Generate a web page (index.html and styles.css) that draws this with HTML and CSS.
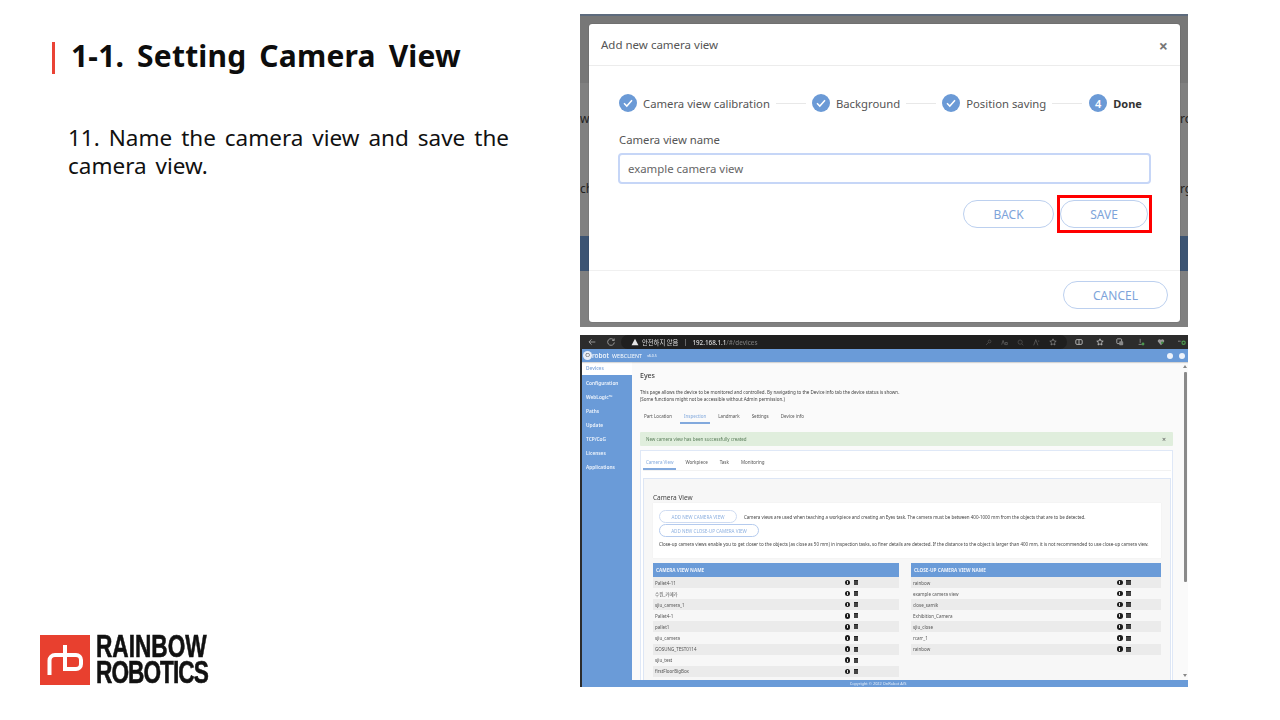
FILE: index.html
```html
<!DOCTYPE html>
<html lang="en">
<head>
<meta charset="utf-8">
<title>1-1. Setting Camera View</title>
<link rel="stylesheet" href="styles.css">
</head>
<body>
<main class="slide">
  <section class="left">
    <h1 class="title">1-1. Setting Camera View</h1>
    <p class="step-text">11. Name the camera view and save the camera view.</p>
    <div class="logo">
      <svg class="logo-mark" viewBox="0 0 50 50" width="50" height="50">
        <rect width="50" height="50" fill="#e8402f"/>
        <path d="M9.500 40V25.500a5.500 5.500 0 0 1 5.500-5.500H25M25 10V34H36a5 5 0 0 0 5-5V25a5 5 0 0 0-5-5H25" fill="none" stroke="#fff" stroke-width="4"/>
      </svg>
      <div class="logo-text"><span>RAINBOW</span><span class="logo-second">ROBOTICS</span></div>
    </div>
  </section>

  <section class="right">
    <div class="shot-top">
      <div class="band band-a"></div>
      <div class="band band-b"></div>
      <div class="band band-c"></div>
      <div class="band band-d"></div>
      <span class="frag frag-w">w</span><span class="frag frag-ch">ch</span>
      <span class="frag frag-ro">ro</span><span class="frag frag-rg">rg</span>
      <div class="modal">
        <header class="modal-head"><span>Add new camera view</span><span class="close">×</span></header>
        <div class="modal-body">
          <div class="stepper">
            <span class="dot"><svg viewBox="0 0 18 18" width="18" height="18"><path d="M5 9.300l2.800 2.800L13 6.300" fill="none" stroke="#fff" stroke-width="1.500"/></svg></span>
            <span class="step-name">Camera view calibration</span><i class="line"></i>
            <span class="dot"><svg viewBox="0 0 18 18" width="18" height="18"><path d="M5 9.300l2.800 2.800L13 6.300" fill="none" stroke="#fff" stroke-width="1.500"/></svg></span>
            <span class="step-name">Background</span><i class="line"></i>
            <span class="dot"><svg viewBox="0 0 18 18" width="18" height="18"><path d="M5 9.300l2.800 2.800L13 6.300" fill="none" stroke="#fff" stroke-width="1.500"/></svg></span>
            <span class="step-name">Position saving</span><i class="line line-last"></i>
            <span class="dot">4</span>
            <span class="step-name step-done">Done</span>
          </div>
          <label class="field-label">Camera view name</label>
          <div class="input">example camera view</div>
          <div class="actions">
            <span class="pill pill-back">BACK</span>
            <span class="save-mark"><span class="pill pill-save">SAVE</span></span>
          </div>
        </div>
        <footer class="modal-foot"><span class="pill pill-cancel">CANCEL</span></footer>
      </div>
    </div>

    <div class="shot-bottom">
      <div class="browser">
        <svg class="b-ico" viewBox="0 0 12 12" width="10" height="10"><path d="M10 6H2.500M5.500 2.800L2.300 6l3.200 3.200" fill="none" stroke="#aaa" stroke-width="1"/></svg>
        <svg class="b-ico b-reload" viewBox="0 0 12 12" width="10" height="10"><path d="M9.500 4A4 4 0 1 0 10 6.500M9.800 1.800V4.200H7.400" fill="none" stroke="#aaa" stroke-width="1"/></svg>
        <div class="omni">
          <svg viewBox="0 0 10 10" width="8" height="8"><path d="M5 1l4.300 8H.7z" fill="#e6e6e6"/></svg>
          <span class="omni-warn">안전하지 않음</span><i class="omni-sep"></i>
          <span class="omni-url">192.168.1.1<em>/#/devices</em></span>
          <span class="omni-tools">
            <svg viewBox="0 0 10 10" width="7" height="7"><circle cx="6.500" cy="3.500" r="2" fill="none" stroke="#555"/><path d="M5 5L1.500 8.500" stroke="#555"/></svg>
            <svg viewBox="0 0 10 10" width="7" height="7"><path d="M1 8L3 2l2 6M6 5h3v3H6z" fill="none" stroke="#666"/></svg>
            <svg viewBox="0 0 10 10" width="7" height="7"><circle cx="4.500" cy="4.500" r="3" fill="none" stroke="#555"/><path d="M7 7l2 2" stroke="#555"/></svg>
            <svg viewBox="0 0 10 10" width="7" height="7"><path d="M1 9l3-8 3 8M7 3h2" fill="none" stroke="#666"/></svg>
            <svg viewBox="0 0 10 10" width="8" height="8"><path d="M5 1l1.200 2.700 2.800.3-2.100 1.900.6 2.900L5 7.300 2.500 8.800l.6-2.900L1 4l2.800-.3z" fill="none" stroke="#999" stroke-width=".8"/></svg>
          </span>
        </div>
        <span class="ext-tools">
          <svg viewBox="0 0 10 10" width="8" height="8"><rect x="1" y="2" width="8" height="6" rx="1.500" fill="none" stroke="#ccc"/><path d="M5 2v6" stroke="#ccc"/></svg>
          <svg viewBox="0 0 10 10" width="8" height="8"><path d="M5 1l1.200 2.700 2.800.3-2.100 1.900.6 2.900L5 7.300 2.500 8.800l.6-2.900L1 4l2.800-.3z" fill="none" stroke="#ccc"/></svg>
          <svg viewBox="0 0 10 10" width="8" height="8"><rect x="1" y="1" width="6" height="6" rx="1" fill="none" stroke="#bbb"/><rect x="4" y="4" width="5" height="5" rx="1" fill="#888"/></svg>
          <svg viewBox="0 0 10 10" width="8" height="8"><path d="M4 1v5M2 8h4" stroke="#999"/><circle cx="7.500" cy="7.500" r="1.800" fill="#4d9a4f"/></svg>
          <svg viewBox="0 0 10 10" width="8" height="8"><path d="M5 9L1 4.500a2.300 2.300 0 0 1 4-2 2.300 2.300 0 0 1 4 2z" fill="#999"/><circle cx="6.500" cy="6" r="1.500" fill="#3b8a3f"/></svg>
          <svg viewBox="0 0 10 10" width="8" height="8"><path d="M0 4h4" stroke="#bbb" stroke-dasharray="1 .6"/><circle cx="7" cy="6" r="2" fill="none" stroke="#4d9a4f" stroke-width="1.500"/></svg>
        </span>
      </div>

      <div class="app">
        <header class="app-head">
          <span class="app-logo">O</span><span class="app-robot">robot</span><span class="app-name">WEBCLIENT</span><span class="app-ver">v6.0.5</span>
          <span class="app-icons"><i class="app-dot"></i><i class="app-dot"></i></span>
        </header>
        <div class="app-body">
          <nav class="side">
            <a class="side-active">Devices</a>
            <a>Configuration</a>
            <a>WebLogic™</a>
            <a>Paths</a>
            <a>Update</a>
            <a>TCP/CoG</a>
            <a>Licenses</a>
            <a>Applications</a>
          </nav>
          <div class="content">
            <h2 class="eyes">Eyes</h2>
            <p class="desc">This page allows the device to be monitored and controlled. By navigating to the Device info tab the device status is shown.<br>(Some functions might not be accessible without Admin permission.)</p>
            <div class="tabs tabs-main">
              <span>Part Location</span><span class="tab-on">Inspection</span><span>Landmark</span><span>Settings</span><span>Device info</span>
            </div>
            <div class="alert"><span>New camera view has been successfully created</span><b>×</b></div>
            <div class="card">
              <div class="tabs tabs-sub">
                <span class="tab-on">Camera View</span><span>Workpiece</span><span>Task</span><span>Monitoring</span>
              </div>
              <div class="panel">
                <h3 class="panel-title">Camera View</h3>
                <div class="info">
                  <div class="info-row"><span class="mini-pill mp-1">ADD NEW CAMERA VIEW</span><span>Camera views are used when teaching a workpiece and creating an Eyes task. The camera must be between 400-1000 mm from the objects that are to be detected.</span></div>
                  <div class="info-row"><span class="mini-pill mp-2">ADD NEW CLOSE-UP CAMERA VIEW</span></div>
                  <p class="info-note">Close-up camera views enable you to get closer to the objects (as close as 50 mm) in inspection tasks, so finer details are detected. If the distance to the object is larger than 400 mm, it is not recommended to use close-up camera view.</p>
                </div>
                <div class="tables">
                  <div class="tbl tbl-l">
                    <div class="tbl-head">CAMERA VIEW NAME</div>
                    <div class="tr"><span>Pallet4-11</span><i class="info-i"></i><i class="trash"></i></div>
                    <div class="tr"><span>수원_카메라</span><i class="info-i"></i><i class="trash"></i></div>
                    <div class="tr"><span>sjiu_camera_1</span><i class="info-i"></i><i class="trash"></i></div>
                    <div class="tr"><span>Pallet4-1</span><i class="info-i"></i><i class="trash"></i></div>
                    <div class="tr"><span>pallet1</span><i class="info-i"></i><i class="trash"></i></div>
                    <div class="tr"><span>sjiu_camera</span><i class="info-i"></i><i class="trash"></i></div>
                    <div class="tr"><span>GOSUNG_TEST0114</span><i class="info-i"></i><i class="trash"></i></div>
                    <div class="tr"><span>sjiu_test</span><i class="info-i"></i><i class="trash"></i></div>
                    <div class="tr"><span>firstFloorBigBox</span><i class="info-i"></i><i class="trash"></i></div>
                  </div>
                  <div class="tbl tbl-r">
                    <div class="tbl-head">CLOSE-UP CAMERA VIEW NAME</div>
                    <div class="tr"><span>rainbow</span><i class="info-i"></i><i class="trash"></i></div>
                    <div class="tr"><span>example camera view</span><i class="info-i"></i><i class="trash"></i></div>
                    <div class="tr"><span>close_samik</span><i class="info-i"></i><i class="trash"></i></div>
                    <div class="tr"><span>Exhibition_Camera</span><i class="info-i"></i><i class="trash"></i></div>
                    <div class="tr"><span>sjiu_close</span><i class="info-i"></i><i class="trash"></i></div>
                    <div class="tr"><span>rcarr_1</span><i class="info-i"></i><i class="trash"></i></div>
                    <div class="tr"><span>rainbow</span><i class="info-i"></i><i class="trash"></i></div>
                  </div>
                </div>
              </div>
            </div>
          </div>
          <div class="scroll"><i class="sc-up"></i><i class="sc-thumb"></i><i class="sc-down"></i></div>
        </div>
        <footer class="app-foot">Copyright © 2022 OnRobot A/S</footer>
      </div>
    </div>
  </section>
</main>
</body>
</html>
```
FILE: styles.css
```css
* { box-sizing: border-box; }
html, body { margin: 0; padding: 0; background: #fff; }
body { width: 1280px; height: 720px; overflow: hidden; font-family: "Noto Sans", "Noto Sans CJK KR", sans-serif; }
.slide { display: flex; width: 1280px; height: 720px; }

/* left column */
.left { width: 580px; flex: none; display: flex; flex-direction: column; padding: 42px 0 35px 40px; }
.title { margin: 0 0 0 12px; height: 32px; border-left: 3.500px solid #ea4335; padding-left: 16px; font-size: 30px; line-height: 28px; font-weight: 700; color: #0d0d0d; word-spacing: 5px; letter-spacing: .19px; white-space: nowrap; }
.step-text { margin: 50px 0 0 28px; width: 441px; font-size: 22.500px; line-height: 28px; color: #111; text-align: justify; word-spacing: 3px; }
.logo { margin-top: auto; display: flex; align-items: center; gap: 6px; height: 50px; }
.logo-mark { display: block; flex: none; }
.logo-text { display: flex; flex-direction: column; font-family: "Liberation Sans", sans-serif; font-weight: 700; font-size: 31px; line-height: 26px; color: #111; -webkit-text-stroke: .6px #111; transform-origin: left center; transform: scaleX(.73); }
.logo-text span { display: block; white-space: nowrap; height: 26px; }
.logo-text .logo-second { letter-spacing: -1.300px; }

/* top screenshot */
.right { width: 608px; flex: none; padding-top: 14px; display: flex; flex-direction: column; gap: 8px; }
.shot-top { position: relative; height: 313px; background: #808080; overflow: hidden; display: flex; flex-direction: column; }
.band { flex: none; }
.band-a { height: 2px; background: #5d6b7d; }
.band-b { height: 67px; background: #777; }
.band-c { height: 153px; background: #808080; }
.band-d { height: 35px; background: #3c5473; }
.frag { position: absolute; font-size: 12px; line-height: 14px; color: #222; }
.frag-w { left: 0; top: 98px; }
.frag-ch { left: 0; top: 168px; }
.frag-ro { left: 600px; top: 98px; }
.frag-rg { left: 600px; top: 168px; }
.modal { position: absolute; left: 9px; top: 10px; width: 591px; height: 298px; background: #fff; border-radius: 3px; box-shadow: 0 0 1px rgba(0,0,0,.5); display: flex; flex-direction: column; color: #555; }
.modal-head { flex: none; height: 42px; padding: 0 12px; display: flex; justify-content: space-between; align-items: center; border-bottom: 1px solid #ececec; font-size: 11.500px; }
.close { font-size: 16px; font-weight: 700; color: #777; margin: 2px 0 0; }
.modal-body { flex: none; height: 205px; padding: 28px 29px 0 29px; border-bottom: 1px solid #f0f0f0; }
.stepper { display: flex; align-items: center; height: 18px; margin-left: 1px; font-size: 11.300px; }
.dot { width: 18px; height: 18px; flex: none; border-radius: 50%; background: #6b9ad6; color: #fff; display: flex; align-items: center; justify-content: center; font-size: 11px; font-weight: 600; }
.dot svg { display: block; }
.step-name { margin-left: 6px; white-space: nowrap; }
.step-done { font-weight: 700; color: #333; font-size: 11px; }
.line { flex: none; width: 30px; height: 1px; background: #e8e8e8; margin: 0 6px; }
.line-last { margin-right: 7px; }
.field-label { display: block; margin: 20px 0 0 1px; font-size: 11.300px; line-height: 16px; color: #555; }
.input { margin-top: 5px; width: 533px; height: 31px; border: 2px solid #c6d6f7; border-radius: 4px; padding: 0 8px; font-size: 11.400px; line-height: 27px; color: #666; }
.actions { display: flex; justify-content: flex-end; align-items: center; gap: 3px; margin-top: 11px; width: 534px; }
.pill { display: flex; align-items: center; justify-content: center; height: 28px; border: 1px solid #bcd0ef; border-radius: 14px; color: #7ea4da; font-size: 12px; background: #fff; }
.pill-back { width: 91px; }
.pill-save { width: 88px; }
.save-mark { display: block; padding: 2px 1px 2px 0; border: 3px solid #f00; }
.modal-foot { flex: 1; display: flex; justify-content: flex-end; align-items: center; padding-right: 12px; padding-bottom: 3px; }
.pill-cancel { width: 105px; }

/* bottom screenshot */
.shot-bottom { height: 352px; display: flex; flex-direction: column; overflow: hidden; background: #fafafa; filter: blur(.5px); }
.browser { flex: none; height: 14px; background: #2c2c2c; display: flex; align-items: center; padding-left: 7px; }
.b-ico { flex: none; display: block; }
.b-reload { margin-left: 9px; }
.omni { margin-left: 5px; width: 446px; height: 14px; border-radius: 7px; background: #1f1f1f; display: flex; align-items: center; padding-left: 10px; font-size: 6.300px; color: #ddd; }
.omni svg { flex: none; display: block; }
.omni-warn { margin-left: 3px; white-space: nowrap; }
.omni-sep { width: 1px; height: 7px; background: #666; margin: 0 6px 0 7px; }
.omni-url { white-space: nowrap; font-weight: 500; }
.omni-url em { font-style: normal; color: #777; }
.omni-tools { margin-left: auto; margin-right: 10px; display: flex; gap: 9px; align-items: center; }
.ext-tools { margin-left: 8px; display: flex; gap: 12.500px; align-items: center; }
.ext-tools svg { display: block; flex: none; }
.app { flex: 1; min-height: 0; display: flex; flex-direction: column; border-left: 2px solid #2c2c2c; }
.app-head { flex: none; height: 13px; background: #6a9bd8; color: #fff; display: flex; align-items: center; padding-left: 1px; font-size: 6px; box-shadow: 0 1px 1px rgba(0,0,0,.15); position: relative; z-index: 1; }
.app-logo { width: 9px; height: 9px; border-radius: 50%; background: #e8eef8; color: #555; font-size: 6px; line-height: 9px; text-align: center; flex: none; }
.app-robot { font-weight: 500; font-size: 6.500px; margin-right: 3px; }
.app-name { font-size: 5.300px; letter-spacing: .1px; }
.app-ver { font-size: 3.500px; margin-left: 5px; }
.app-icons { margin-left: auto; display: flex; gap: 6px; padding-right: 3px; }
.app-dot { width: 6px; height: 6px; border-radius: 50%; background: #eef3fb; display: block; }
.app-body { flex: 1; min-height: 0; display: flex; overflow: hidden; }
.side { flex: none; width: 50px; background: #6a9bd8; display: flex; flex-direction: column; }
.side a { display: block; height: 14px; line-height: 14px; padding-left: 4px; font-size: 4.800px; font-weight: 600; color: #f0f5fc; }
.side .side-active { background: #fff; color: #82a9dd; height: 13px; line-height: 13px; margin-bottom: 1px; }
.content { flex: none; width: 548px; padding: 0 0 0 8px; background: #fafafa; overflow: hidden; }
.eyes { margin: 9px 0 0; font-size: 7px; line-height: 9px; font-weight: 500; color: #444; }
.desc { margin: 9px 0 0; font-size: 4.500px; line-height: 7px; color: #444; }
.tabs { display: flex; font-size: 4.500px; color: #555; }
.tabs span { display: block; white-space: nowrap; }
.tabs .tab-on { color: #82a9dd; border-bottom: 2px solid #82a9dd; }
.tabs-main { margin-top: 7px; height: 14px; line-height: 12px; padding-left: 4px; }
.tabs-main span { margin-right: 12px; height: 14px; }
.tabs-main .tab-on { padding: 0 4px; margin: 0 8px 0 -4px; }
.alert { margin-top: 8px; width: 533px; height: 14px; background: #e0eedd; border-radius: 1px; display: flex; align-items: center; justify-content: space-between; padding: 0 6px; font-size: 4.500px; color: #5c7f5c; }
.alert b { font-size: 7px; font-weight: 400; color: #555; margin-right: 1px; }
.card { margin-top: 4px; width: 533px; height: 240px; background: #fff; border: 1px solid #dfe8f7; padding: 0 1px 0 2px; }
.tabs-sub { height: 20px; padding: 9px 0 0 0; line-height: 5px; border-bottom: 1px solid #f2f2f2; }
.tabs-sub span { margin-right: 12px; height: 10px; }
.tabs-sub .tab-on { padding: 0 3px; margin-right: 9px; }
.panel { margin-top: 7px; height: 212px; background: #f7f7f7; border: 1px solid #dde6f5; padding: 14px 9px 0; }
.panel-title { margin: 0; font-size: 6.500px; line-height: 10px; font-weight: 400; color: #444; }
.info { background: #fff; height: 55px; padding: 7px 6px 0; font-size: 4.480px; color: #444; box-shadow: 0 0 1px rgba(0,0,0,.08); }
.info-row { display: flex; align-items: center; white-space: nowrap; }
.mini-pill { display: flex; align-items: center; justify-content: center; border-radius: 7px; border: 1px solid #cfdcf2; color: #8db0e0; height: 13px; font-size: 4.600px; flex: none; }
.mp-1 { width: 78px; margin-right: 7px; }
.mp-2 { width: 100px; border-color: #b5cbee; margin-top: 1px; }
.info-note { margin: 4px 0 0; white-space: nowrap; }
.tables { display: flex; justify-content: space-between; margin-top: 5px; }
.tbl { flex: none; }
.tbl-l { width: 246px; }
.tbl-r { width: 250px; }
.tbl-head { height: 14px; background: #6a9bd8; color: #eef3fb; font-size: 4.700px; font-weight: 700; line-height: 14px; padding-left: 3px; }
.tr { display: flex; align-items: center; height: 11.100px; padding-left: 2px; font-size: 4.500px; color: #555; }
.tr:nth-child(even) { background: #ebebeb; }
.tr span { display: block; white-space: nowrap; flex: none; }
.tbl-l .tr span { width: 189.500px; }
.tbl-r .tr span { width: 204px; }
.info-i { width: 5.500px; height: 5.500px; border-radius: 50%; background: #1c1c1c; flex: none; display: flex; align-items: center; justify-content: center; }
.info-i::before { content: ""; width: 1px; height: 3px; background: #ddd; display: block; }
.trash { width: 4.500px; height: 5px; background: #444; border-top: 1px solid #222; flex: none; display: block; margin-left: 3.500px; }
.scroll { flex: 1; background: #fafafa; display: flex; flex-direction: column; align-items: center; padding: 3px 0 0 2px; }
.sc-up { width: 0; height: 0; border: 2px solid transparent; border-bottom: 3px solid #888; border-top: 0; display: block; }
.sc-thumb { width: 3px; height: 210px; margin-top: 4px; background: #8a8a8a; border-radius: 1px; display: block; }
.sc-down { width: 0; height: 0; border: 2px solid transparent; border-top: 3px solid #888; border-bottom: 0; display: block; margin-top: auto; margin-bottom: 3px; }
.app-foot { flex: none; height: 7px; background: #6a9bd8; color: #e8eff9; font-size: 3.900px; line-height: 7px; text-align: center; padding-right: 14px; }
```
